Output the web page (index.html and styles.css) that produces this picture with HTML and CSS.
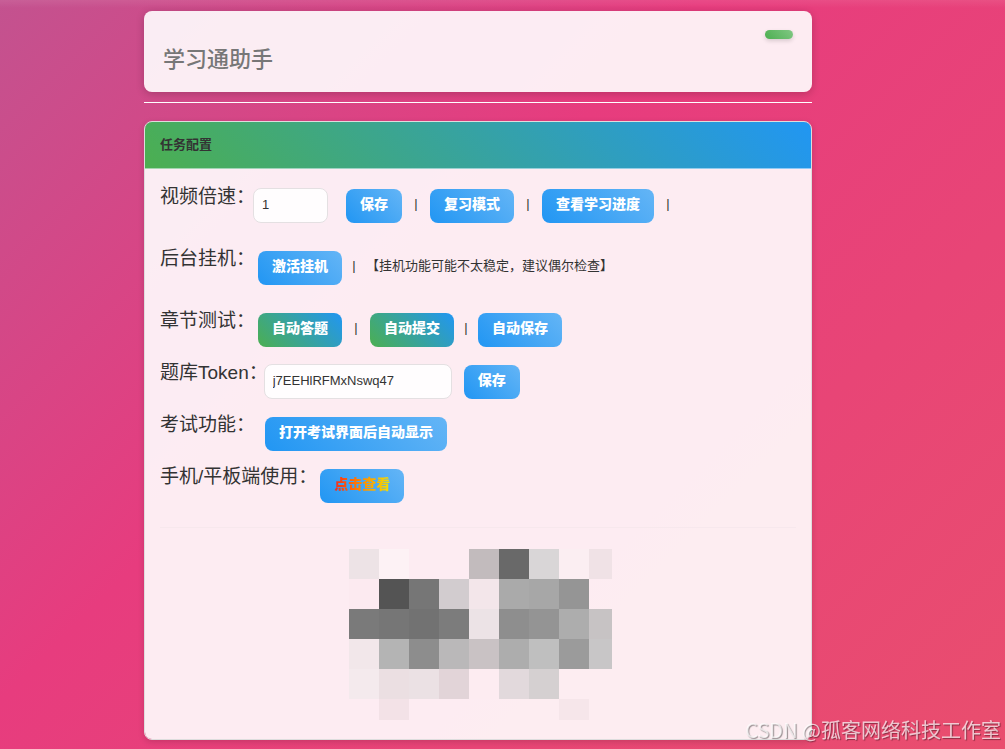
FILE: index.html
```
<!DOCTYPE html>
<html lang="zh-CN">
<head>
<meta charset="utf-8">
<title>学习通助手</title>
<link rel="stylesheet" href="styles.css">
</head>
<body>

<div class="container">

<header class="banner">
    <h1>学习通助手</h1>
    <span class="badge"></span>
</header>

<hr class="line">

<section class="card">
<h2 class="card-header">任务配置</h2>
<div class="card-body">

<div class="row tall">
    <label for="speed">视频倍速：</label>
    <input id="speed" class="speed" type="text" value="1">
    <button type="button" class="btn">保存</button>
    <span class="sep">|</span>
    <button type="button" class="btn">复习模式</button>
    <span class="sep">|</span>
    <button type="button" class="btn">查看学习进度</button>
    <span class="sep">|</span>
</div>

<div class="row tall">
    <span class="name">后台挂机：</span>
    <button type="button" class="btn">激活挂机</button>
    <span class="sep narrow">|</span>
    <span class="hint">【挂机功能可能不太稳定，建议偶尔检查】</span>
</div>

<div class="row">
    <span class="name">章节测试：</span>
    <button type="button" class="btn on">自动答题</button>
    <span class="sep">|</span>
    <button type="button" class="btn on">自动提交</button>
    <span class="sep narrow">|</span>
    <button type="button" class="btn">自动保存</button>
</div>

<div class="row">
    <label for="token">题库Token：</label>
    <input id="token" class="token" type="text" value="j7EEHlRFMxNswq47">
    <button type="button" class="btn">保存</button>
</div>

<div class="row exam">
    <span class="name">考试功能：</span>
    <button type="button" class="btn">打开考试界面后自动显示</button>
</div>

<div class="row">
    <span class="name">手机/平板端使用：</span>
    <button type="button" class="btn"><span class="rainbow">点击查看</span></button>
</div>

<hr class="divider">

<svg class="mosaic" width="267" height="171" viewBox="-4 0 267 171" shape-rendering="crispEdges" aria-hidden="true">
    <rect x="0" y="0" width="30" height="30" fill="#ede3e6"/>
    <rect x="30" y="0" width="30" height="30" fill="#fdf2f5"/>
    <rect x="120" y="0" width="30" height="30" fill="#c2bbbd"/>
    <rect x="150" y="0" width="30" height="30" fill="#696969"/>
    <rect x="180" y="0" width="30" height="30" fill="#d9d6d7"/>
    <rect x="210" y="0" width="30" height="30" fill="#fbeef2"/>
    <rect x="240" y="0" width="23" height="30" fill="#f0e2e6"/>

    <rect x="0" y="30" width="30" height="30" fill="#fceaf0"/>
    <rect x="30" y="30" width="30" height="30" fill="#545454"/>
    <rect x="60" y="30" width="30" height="30" fill="#767676"/>
    <rect x="90" y="30" width="30" height="30" fill="#d2cccf"/>
    <rect x="120" y="30" width="30" height="30" fill="#f3e6ea"/>
    <rect x="150" y="30" width="30" height="30" fill="#aaaaaa"/>
    <rect x="180" y="30" width="30" height="30" fill="#a7a7a7"/>
    <rect x="210" y="30" width="30" height="30" fill="#959595"/>

    <rect x="0" y="60" width="30" height="30" fill="#7a7a7a"/>
    <rect x="30" y="60" width="30" height="30" fill="#767676"/>
    <rect x="60" y="60" width="30" height="30" fill="#727272"/>
    <rect x="90" y="60" width="30" height="30" fill="#7c7c7c"/>
    <rect x="120" y="60" width="30" height="30" fill="#ece3e6"/>
    <rect x="150" y="60" width="30" height="30" fill="#8e8e8e"/>
    <rect x="180" y="60" width="30" height="30" fill="#949494"/>
    <rect x="210" y="60" width="30" height="30" fill="#adadad"/>
    <rect x="240" y="60" width="23" height="30" fill="#c7c3c4"/>

    <rect x="0" y="90" width="30" height="30" fill="#f2e7ea"/>
    <rect x="30" y="90" width="30" height="30" fill="#b4b4b4"/>
    <rect x="60" y="90" width="30" height="30" fill="#8d8d8d"/>
    <rect x="90" y="90" width="30" height="30" fill="#bab8b9"/>
    <rect x="120" y="90" width="30" height="30" fill="#c9c2c4"/>
    <rect x="150" y="90" width="30" height="30" fill="#adadad"/>
    <rect x="180" y="90" width="30" height="30" fill="#bfbfbf"/>
    <rect x="210" y="90" width="30" height="30" fill="#9b9b9b"/>
    <rect x="240" y="90" width="23" height="30" fill="#c8c6c7"/>

    <rect x="0" y="120" width="30" height="30" fill="#f4eaed"/>
    <rect x="30" y="120" width="30" height="30" fill="#ebdfe2"/>
    <rect x="60" y="120" width="30" height="30" fill="#ebe1e4"/>
    <rect x="90" y="120" width="30" height="30" fill="#e2d4d8"/>
    <rect x="120" y="120" width="30" height="30" fill="#fdecf1"/>
    <rect x="150" y="120" width="30" height="30" fill="#e2d9dc"/>
    <rect x="180" y="120" width="30" height="30" fill="#d5d0d1"/>

    <rect x="30" y="150" width="30" height="21" fill="#f3e2e7"/>
    <rect x="210" y="150" width="30" height="21" fill="#f6e6ea"/>
</svg>

</div>
</section>

</div>

<div class="watermark">CSDN @孤客网络科技工作室</div>

</body>
</html>
```
FILE: styles.css
```
* {
    box-sizing: border-box;
}

body {
    margin: 0;
    min-height: 100vh;
    background:
        linear-gradient(rgba(255, 255, 255, 0.08), transparent 8px),
        linear-gradient(135deg, #c3528f 0%, #e73c7e 40%, #e94e6e 100%);
    color: #333;
    font: 13px "Liberation Sans", "Noto Sans CJK SC", sans-serif;
}

.container {
    padding: 11px 193px 9px 144px;
}

.banner {
    display: flex;
    justify-content: space-between;
    align-items: flex-start;
    padding: 19px;
    border-radius: 8px;
    background: rgba(255, 255, 255, 0.9);
    box-shadow: 0 2px 8px rgba(0, 0, 0, 0.2);
}

.banner h1 {
    margin: 17px 0 0;
    color: #777;
    font-size: 22px;
    font-weight: 500;
    line-height: 26px;
}

.badge {
    width: 28px;
    height: 9px;
    border-radius: 5px;
    background: linear-gradient(45deg, #4caf50, #81c784);
    box-shadow: 0 2px 4px rgba(0, 0, 0, 0.15);
}

.line {
    height: 1px;
    margin: 10px 0 18px;
    border: 0;
    background: #fff;
}

.card {
    overflow: hidden;
    border: 1px solid #ddd;
    border-radius: 8px;
    background: rgba(255, 255, 255, 0.9);
    background-clip: padding-box;
    box-shadow: 0 2px 6px rgba(0, 0, 0, 0.15);
}

.card-header {
    margin: 0;
    padding: 0 15px;
    border-bottom: 1px solid rgba(255, 255, 255, 0.5);
    background: linear-gradient(45deg, #4caf50, #2196f3);
    font-size: 13px;
    line-height: 45px;
    padding-bottom: 1px;
}

.card-body {
    padding: 18px 15px 19px;
}

.row {
    display: flex;
    align-items: flex-start;
    height: 36px;
    margin-bottom: 16px;
}

.row.tall {
    margin-bottom: 26px;
}

.row label,
.name {
    margin-right: -4px;
    font-size: 19px;
    line-height: 20px;
    white-space: nowrap;
}

.row input {
    height: 35px;
    margin-top: 1px;
    padding: 0 8px 3px;
    border: 1px solid #e4e0e2;
    border-radius: 8px;
    background: #fffdfe;
    color: #333;
    font: inherit;
}

.row .speed {
    width: 75px;
    margin-left: 2px;
    margin-right: 11px;
}

.row .token {
    width: 188px;
    margin-right: 5px;
}

.btn {
    height: 34px;
    margin: 2px 0 0 7px;
    padding: 0 14px 6px;
    border: 0;
    border-radius: 8px;
    background: linear-gradient(45deg, #2196f3, #64b5f6);
    color: #fff;
    font: 900 14px "Noto Sans CJK SC", sans-serif;
    line-height: 20px;
    white-space: nowrap;
}

.btn.on {
    background: linear-gradient(45deg, #4caf50, #2196f3);
}

.sep + .btn {
    margin-left: 0;
}

.exam .btn {
    margin-left: 14px;
}

.sep,
.hint {
    line-height: 34px;
}

.sep {
    width: 28px;
    text-align: center;
}

.sep.narrow {
    width: 24px;
}

.hint {
    white-space: nowrap;
}

.rainbow {
    background: linear-gradient(to right, #f42a1c, #ff8c00, #f5e000);
    background-clip: text;
    -webkit-background-clip: text;
    color: transparent;
}

.divider {
    height: 1px;
    margin: 24px 0 21px;
    border: 0;
    background: #f7e8ed;
}

.mosaic {
    display: block;
    margin: 0 auto;
}

.watermark {
    position: fixed;
    right: 4px;
    bottom: 5px;
    color: rgba(255, 255, 255, 0.7);
    font: 20px "Noto Sans CJK SC", sans-serif;
    line-height: 28px;
    text-shadow: 1px 1px 1px rgba(0, 0, 0, 0.4);
}
```
